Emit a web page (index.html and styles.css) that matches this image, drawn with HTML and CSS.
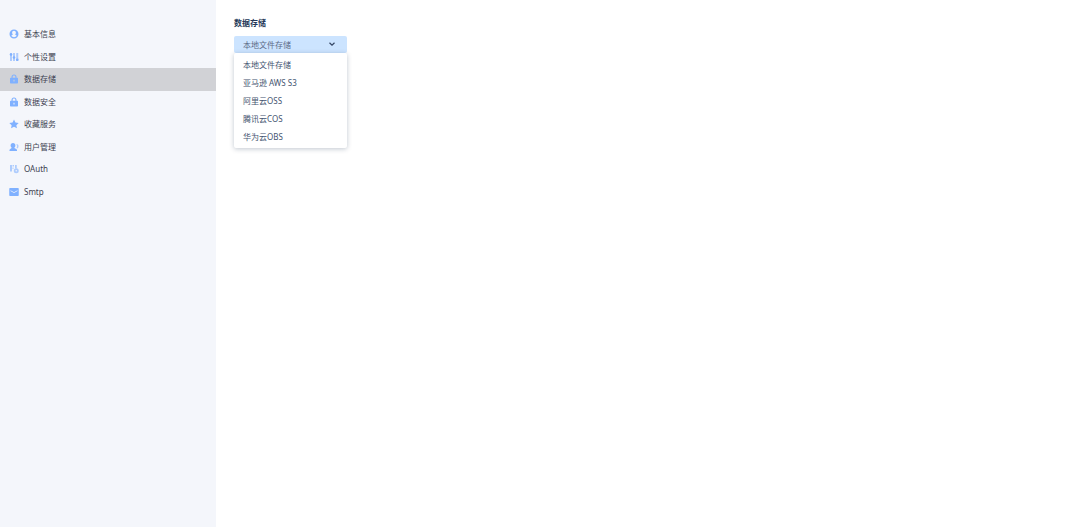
FILE: index.html
```html
<!DOCTYPE html>
<html lang="zh-CN">
<head>
<meta charset="utf-8">
<title>数据存储</title>
<link rel="stylesheet" href="styles.css">
</head>
<body>
<div class="layout">
  <nav class="sidebar">
    <ul class="menu">
      <li><a class="item" href="#basic"><svg class="icon" viewBox="0 0 20 20"><path fill-rule="evenodd" d="M10 1a9 9 0 1 0 0 18 9 9 0 0 0 0-18zM10 3.500c2.200 0 3.800 1.700 3.800 4 0 1.600-.7 3-1.600 3.700l3.300 2.300c-1.300 1.800-3.200 2.900-5.500 2.900s-4.200-1.100-5.500-2.900l3.300-2.300C6.900 10.500 6.200 9.100 6.200 7.500c0-2.300 1.600-4 3.800-4z"/></svg><span>基本信息</span></a></li>
      <li><a class="item" href="#personal"><svg class="icon" viewBox="0 0 20 20"><g class="soft"><path d="M2 2h4v16H2zM8 2h4v16H8zM14.500 2h4v16h-4z"/></g><circle cx="4" cy="5" r="2.600"/><circle cx="10" cy="11" r="2.600"/><circle cx="16.500" cy="15.500" r="2.600"/></svg><span>个性设置</span></a></li>
      <li><a class="item active" href="#storage" aria-current="page"><svg class="icon" viewBox="0 0 20 20"><path fill-rule="evenodd" d="M5 7.500V6a5 5 0 0 1 10 0v1.500h1.500A1.500 1.500 0 0 1 18 9v8.500a1.500 1.500 0 0 1-1.500 1.500h-13A1.500 1.500 0 0 1 2 17.500V9a1.500 1.500 0 0 1 1.500-1.500zM7.200 7.500h5.600V6a2.800 2.800 0 0 0-5.600 0zM9 11.500v3.500h2v-3.500z"/></svg><span>数据存储</span></a></li>
      <li><a class="item" href="#security"><svg class="icon" viewBox="0 0 20 20"><path fill-rule="evenodd" d="M5 7.500V6a5 5 0 0 1 10 0v1.500h1.500A1.500 1.500 0 0 1 18 9v8.500a1.500 1.500 0 0 1-1.500 1.500h-13A1.500 1.500 0 0 1 2 17.500V9a1.500 1.500 0 0 1 1.500-1.500zM7.200 7.500h5.600V6a2.800 2.800 0 0 0-5.600 0zM9 11.500v3.500h2v-3.500z"/></svg><span>数据安全</span></a></li>
      <li><a class="item" href="#favorites"><svg class="icon" viewBox="0 0 20 20"><path d="M10 1l2.900 5.900 6.500.9-4.700 4.500 1.200 6.400L10 15.600l-5.900 3.100 1.200-6.400L.6 7.800l6.500-.9z"/></svg><span>收藏服务</span></a></li>
      <li><a class="item" href="#users"><svg class="icon" viewBox="0 0 20 20"><path d="M8 2c3 0 4.800 2 4.800 4.800 0 2-.9 3.500-2 4.400v1l3.700 1.800c1 .5 1.500 1.300 1.500 2.300V18H1v-1.700c0-1 .5-1.800 1.500-2.300l2.700-1.800v-1c-1.100-.9-2-2.400-2-4.400C3.200 4 5 2 8 2z"/><path class="soft" d="M14.500 4c3 0 4.500 1.500 4.500 4s-1 4.500-3 5l-1-1.500c1.500-1 1.500-5-.5-7.500z"/></svg><span>用户管理</span></a></li>
      <li><a class="item" href="#oauth"><svg class="icon" viewBox="0 0 20 20"><g class="soft"><path d="M2 2h4v13H2zM7 2h3v3H7zM7 7h2v3H7z"/><path d="M12 2h3.500v7H12z"/><path fill-rule="evenodd" d="M14.500 8.500a5 5 0 1 0 0 10 5 5 0 0 0 0-10zm0 3.500a1.500 1.500 0 1 1 0 3 1.500 1.500 0 0 1 0-3z"/></g></svg><span>OAuth</span></a></li>
      <li><a class="item" href="#smtp"><svg class="icon" viewBox="0 0 20 20"><path fill-rule="evenodd" d="M2 2h16a1.500 1.500 0 0 1 1.500 1.500v13A1.500 1.500 0 0 1 18 18H2a1.500 1.500 0 0 1-1.500-1.500v-13A1.500 1.500 0 0 1 2 2zm1 4.500v1.500L10 12l7-4V6.500l-7 4z"/></svg><span>Smtp</span></a></li>
    </ul>
  </nav>
  <main class="content">
    <label class="title" for="storage">数据存储</label>
    <div class="picker">
      <select class="select" id="storage">
        <option>本地文件存储</option>
        <option>亚马逊 AWS S3</option>
        <option>阿里云OSS</option>
        <option>腾讯云COS</option>
        <option>华为云OBS</option>
      </select>
      <svg class="chevron" viewBox="0 0 8 8"><path d="M1.500 2.800L4 5.200l2.500-2.400"/></svg>
      <div class="options">
        <button class="option" type="button">本地文件存储</button>
        <button class="option" type="button">亚马逊 AWS S3</button>
        <button class="option" type="button">阿里云OSS</button>
        <button class="option" type="button">腾讯云COS</button>
        <button class="option" type="button">华为云OBS</button>
      </div>
    </div>
  </main>
</div>
</body>
</html>
```
FILE: styles.css
```css
* {
  box-sizing: border-box;
}

body {
  margin: 0;
  background: #fff;
  color: #35445f;
  font-family: "Noto Sans", "Noto Sans CJK SC", sans-serif;
  font-size: 8px;
  line-height: 12px;
}

.layout {
  display: flex;
  min-height: 100vh;
}

.sidebar {
  flex: 0 0 20%;
  padding-top: 23px;
  background: #f4f6fb;
}

.menu {
  display: grid;
  grid-template-rows: repeat(8, 1fr);
  min-height: 180px;
  margin: 0;
  padding: 0;
  list-style: none;
}

.item {
  display: flex;
  align-items: center;
  gap: 5px;
  height: 100%;
  padding: 0 9px;
  color: #3c4150;
  text-decoration: none;
}

.active {
  background: #d1d2d6;
}

.icon {
  width: 10px;
  height: 10px;
  fill: #80b1ff;
}

.soft {
  opacity: 0.6;
}

.content {
  flex: 1;
  padding: 17px 18px;
}

.title {
  display: block;
  margin-bottom: 7px;
  color: #253858;
  font-weight: 700;
}

.picker {
  position: relative;
  width: 113px;
}

.select {
  display: block;
  width: 100%;
  height: 17px;
  padding: 0 9px;
  border: 0;
  border-radius: 2px;
  appearance: none;
  background: #cce4ff;
  color: #5c6b87;
  font: inherit;
}

.chevron {
  position: absolute;
  top: 4px;
  right: 11px;
  width: 8px;
  height: 8px;
  fill: none;
  stroke: #344563;
  stroke-width: 1.2;
  pointer-events: none;
}

.options {
  position: absolute;
  top: 100%;
  left: 0;
  width: 100%;
  padding: 3px 0 2px;
  border-radius: 2px;
  background: #fff;
  box-shadow: 0 1px 5px rgba(9, 30, 66, 0.25);
}

.option {
  display: block;
  width: 100%;
  height: 18px;
  padding: 0 9px;
  border: 0;
  background: none;
  color: #44546f;
  font: inherit;
  text-align: left;
}
```
